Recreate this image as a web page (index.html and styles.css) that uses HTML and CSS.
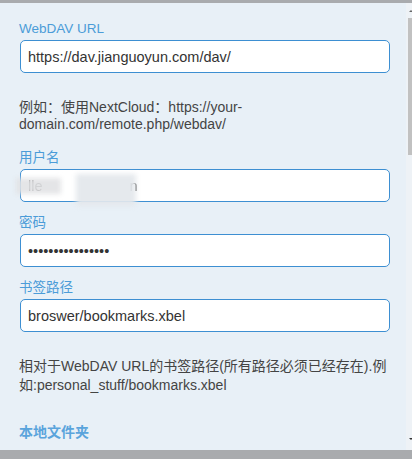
FILE: index.html
```html
<!DOCTYPE html>
<html lang="zh">
<head>
<meta charset="utf-8">
<link rel="stylesheet" href="styles.css">
</head>
<body>
<div class="topbar"></div>
<div class="main">
  <div class="content">
    <label class="label first">WebDAV URL</label>
    <input class="field" type="text" value="https://dav.jianguoyun.com/dav/">
    <p class="help help-a">例如：使用NextCloud：https://your-domain.com/remote.php/webdav/</p>

    <label class="label">用户名</label>
    <div class="field blurred-field">
      <span class="blur-text">lle<span class="hidden-part">xxxxxxxxxxxx</span>n</span>
      <span class="smudge smudge-a"></span>
      <span class="smudge smudge-b"></span>
    </div>

    <label class="label">密码</label>
    <input class="field" type="password" value="abcdefghijklmnop">

    <label class="label">书签路径</label>
    <input class="field" type="text" value="broswer/bookmarks.xbel">
    <p class="help help-b">相对于WebDAV URL的书签路径(所有路径必须已经存在).例如:personal_stuff/bookmarks.xbel</p>

    <h3 class="section">本地文件夹</h3>
  </div>
  <div class="scrollbar">
    <span class="arrow arrow-up"></span>
    <div class="thumb"></div>
    <span class="arrow arrow-down"></span>
  </div>
</div>
<div class="bottombar"></div>
</body>
</html>
```
FILE: styles.css
```css
* { box-sizing: border-box; }
html, body {
  margin: 0;
  padding: 0;
  width: 412px;
  height: 459px;
  overflow: hidden;
}
body {
  font-family: "Liberation Sans", "Noto Sans CJK SC", sans-serif;
  background: #e8f0f7;
  display: flex;
  flex-direction: column;
}
.topbar {
  height: 3px;
  background: #a9abae;
  flex: none;
}
.bottombar {
  height: 9px;
  background: #a9abae;
  flex: none;
}
.main {
  flex: 1;
  display: flex;
  min-height: 0;
}
.content {
  flex: 1;
  padding: 18px 17px 0 19px;
  display: flex;
  flex-direction: column;
  overflow: hidden;
}
.label {
  display: block;
  font-size: 13.5px;
  line-height: 16px;
  color: #4b9cd8;
  margin: 13px 0 3px 0;
}
.label.first { margin-top: 0; }
.field {
  display: block;
  width: 370px;
  margin-left: 1px;
  height: 33px;
  border: 1px solid #3d8fd2;
  border-radius: 5px;
  background: #fff;
  padding: 0 7px;
  font-family: "Liberation Sans", "Noto Sans CJK SC", sans-serif;
  font-size: 14.5px;
  color: #333;
  outline: none;
}
.blurred-field {
  position: relative;
  display: flex;
  align-items: center;
}
.blur-text {
  color: #444;
  filter: blur(0.6px);
}
.hidden-part { color: transparent; }
.smudge {
  position: absolute;
  filter: blur(2.5px);
}
.smudge-a {
  left: -5px;
  top: 8px;
  width: 45px;
  height: 16px;
  background: rgba(225, 226, 228, 0.9);
}
.smudge-b {
  left: 55px;
  top: 4px;
  width: 60px;
  height: 32px;
  background: rgba(228, 232, 236, 0.95);
}
.help {
  margin: 0;
  font-size: 14px;
  color: #444;
}
.help-a {
  line-height: 17px;
  margin: 26px 0 4px 0;
}
.help-b {
  line-height: 19px;
  margin: 25px 0 0 0;
  width: 371px;
}
.section {
  margin: 29px 0 0 0;
  font-size: 14px;
  line-height: 17px;
  font-weight: bold;
  color: #5aa4dc;
}
.scrollbar {
  flex: none;
  width: 6px;
  background: #eef2f6;
  position: relative;
}
.thumb {
  position: absolute;
  left: 2px;
  right: 0;
  top: 15px;
  height: 137px;
  background: #c1c1c1;
}
.arrow {
  position: absolute;
  left: 3px;
  width: 0;
  height: 0;
  border-left: 2px solid transparent;
  border-right: 2px solid transparent;
}
.arrow-up {
  top: 7px;
  border-bottom: 2px solid #666;
}
.arrow-down {
  bottom: 10px;
  border-top: 2px solid #333;
}
```
